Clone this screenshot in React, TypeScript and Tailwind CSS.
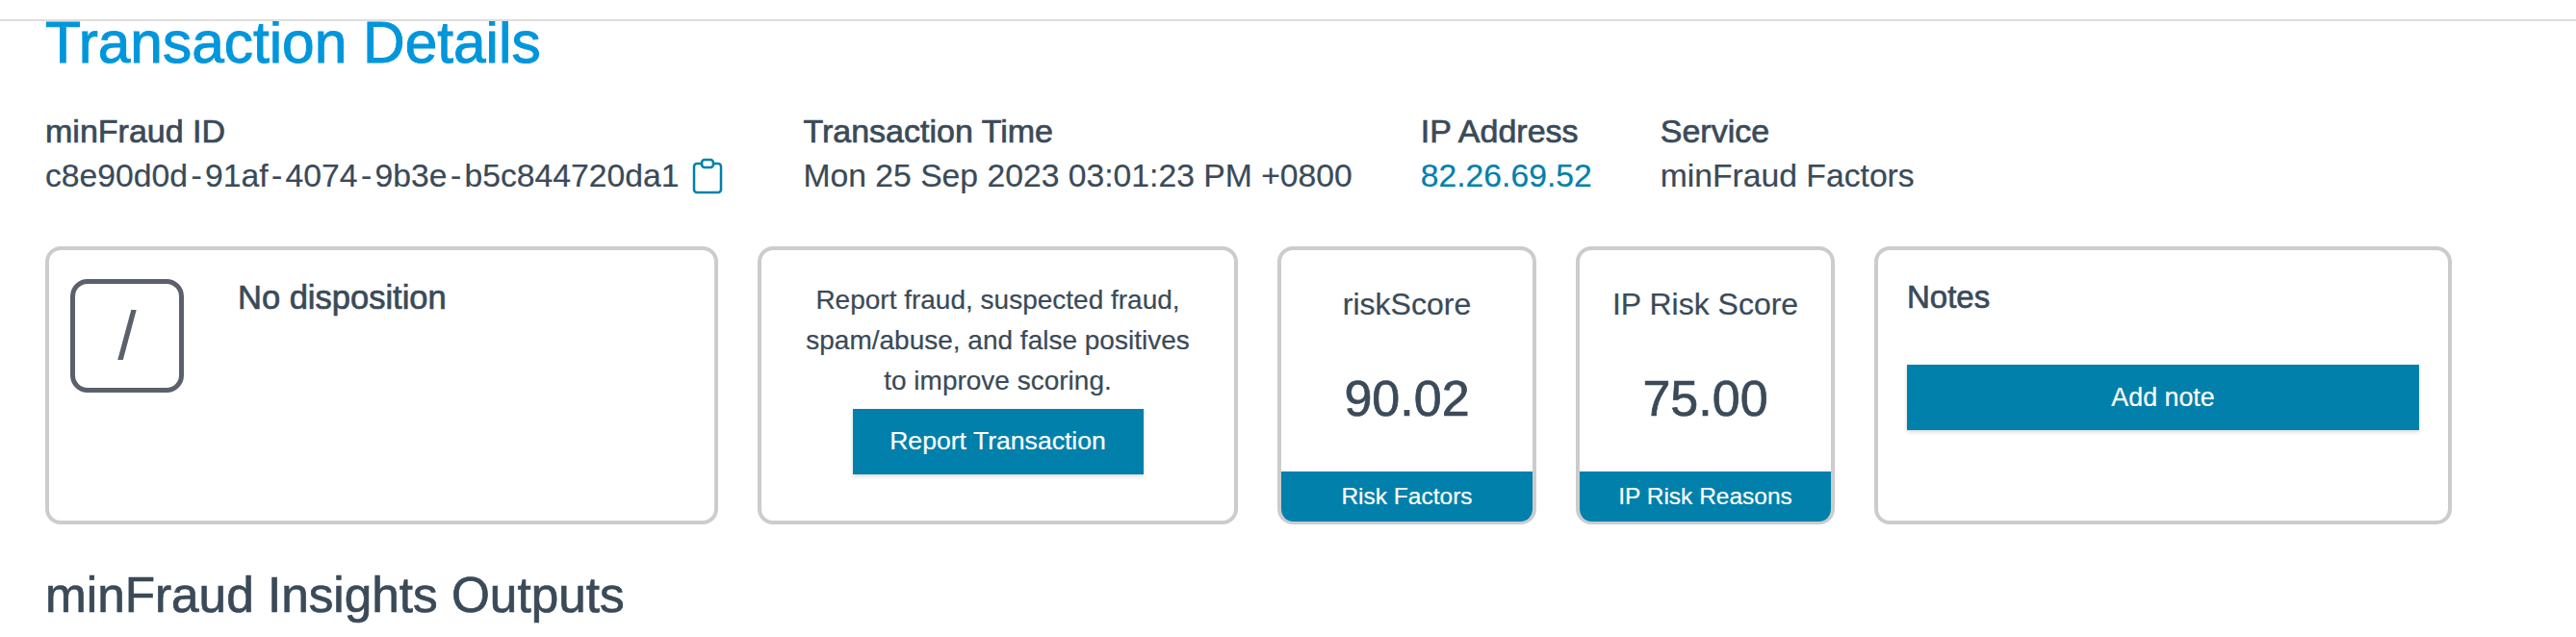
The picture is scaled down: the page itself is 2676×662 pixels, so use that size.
const heading = '[-webkit-text-stroke:0.7px]'

const transactionId = ['c8e90d0d', '91af', '4074', '9b3e', 'b5c844720da1']

function Meta({ label, children }: { label: string; children: React.ReactNode }) {
  return (
    <div>
      <div className={`text-[34px] leading-[46px] ${heading}`}>{label}</div>
      <div className="text-[33.7px] leading-[46px] flex items-center">{children}</div>
    </div>
  )
}

function ScoreCard({ title, score, action }: { title: string; score: string; action: string }) {
  return (
    <div className="w-[269px] h-[289px] border-[4px] border-b-[3px] border-[#cccccc] rounded-[16px] overflow-hidden flex flex-col text-center">
      <div className="pt-[36px] text-[32px] leading-[40px]">{title}</div>
      <div className={`mt-[48px] text-[52px] leading-[60px] ${heading}`}>{score}</div>
      <div className="mt-auto h-[52px] bg-[#0080ab] text-white text-[24.5px] leading-[52px]">{action}</div>
    </div>
  )
}

export default function App() {
  return (
    <div className="h-[662px] bg-white text-[#3a4a58] font-['Liberation_Sans',Arial,sans-serif] overflow-hidden [-webkit-text-stroke:0.2px]">
      <div className="h-[22px] border-b-2 border-[#dddddd]" />

      <div className="px-[47px]">
        <div className="h-[50px] overflow-hidden">
          <h1 className="-mt-[11px] text-[60.4px] leading-[66px] text-[#0096dc] [-webkit-text-stroke:1px]">Transaction Details</h1>
        </div>

        {/* Summary row */}
        <div className="mt-[41px] flex gap-[71px]">
          <Meta label="minFraud ID">
            {transactionId.map((part, i) => (
              <span key={part}>
                {i > 0 && <span className="mx-[3.4px]">-</span>}
                {part}
              </span>
            ))}
            <svg className="ml-[14px] mr-[12px] mt-[2px]" width="32" height="38" viewBox="0 0 32 38" fill="none" stroke="#0080ab" strokeWidth="2.5">
              <path d="M10 6H5a3 3 0 0 0-3 3v24a3 3 0 0 0 3 3h22a3 3 0 0 0 3-3V9a3 3 0 0 0-3-3h-5" strokeLinecap="round" />
              <rect x="10" y="2" width="12" height="8" rx="3" />
            </svg>
          </Meta>
          <Meta label="Transaction Time">Mon 25 Sep 2023 03:01:23 PM +0800</Meta>
          <Meta label="IP Address"><span className="text-[#0080ab]">82.26.69.52</span></Meta>
          <Meta label="Service">minFraud Factors</Meta>
        </div>

        {/* Cards */}
        <div className="mt-[51px] flex gap-[41px]">
          <div className="w-[699px] h-[289px] border-[4px] border-[#cccccc] rounded-[16px] pl-[22px] pt-[30px] flex">
            <div className="w-[118px] h-[118px] border-[5px] border-[#5b616b] rounded-[18px] flex items-center justify-center text-[70px] leading-none text-[#5b616b] [-webkit-text-stroke:0px]">
              /
            </div>
            <div className={`ml-[56px] text-[34.5px] leading-[40px] -mt-[1px] ${heading}`}>No disposition</div>
          </div>

          <div className="w-[499px] h-[289px] border-[4px] border-[#cccccc] rounded-[16px] pt-[31px] flex flex-col items-center">
            <p className="text-[28px] leading-[42px] text-center">
              Report fraud, suspected fraud,
              <br />
              spam/abuse, and false positives
              <br />
              to improve scoring.
            </p>
            <button className="mt-[8px] w-[302px] h-[68px] bg-[#0080ab] text-white text-[26.6px] shadow-[0_2px_4px_rgba(0,0,0,0.15)]">
              Report Transaction
            </button>
          </div>

          <ScoreCard title="riskScore" score="90.02" action="Risk Factors" />
          <ScoreCard title="IP Risk Score" score="75.00" action="IP Risk Reasons" />

          <div className="w-[600px] h-[289px] border-[4px] border-[#cccccc] rounded-[16px] px-[30px] pt-[30px]">
            <div className={`text-[33px] leading-[40px] -mt-[1px] ${heading}`}>Notes</div>
            <button className="mt-[50px] w-full h-[68px] bg-[#0080ab] text-white text-[26.8px] shadow-[0_2px_4px_rgba(0,0,0,0.15)]">
              Add note
            </button>
          </div>
        </div>

        <h2 className={`mt-[44px] text-[51.3px] leading-[60px] ${heading}`}>minFraud Insights Outputs</h2>
      </div>
    </div>
  )
}
